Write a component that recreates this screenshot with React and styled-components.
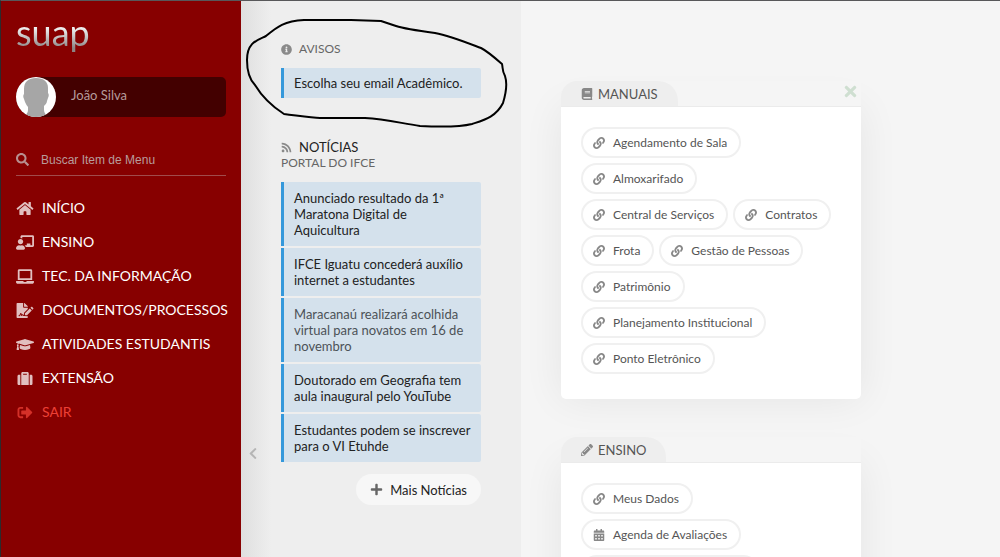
import React from "react";
import styled, { createGlobalStyle } from "styled-components";
import {
  FaBook, FaCalendarAlt, FaChalkboardTeacher, FaChevronLeft, FaFileSignature,
  FaGraduationCap, FaHome, FaInfoCircle, FaLaptop, FaLink, FaPencilAlt, FaPlus,
  FaRss, FaSearch, FaSignOutAlt, FaSuitcase, FaTimes,
} from "react-icons/fa";

const Global = createGlobalStyle`
  *, *::before, *::after { box-sizing: border-box; }
  body { margin: 0; background: #f5f5f5; color: #222; font: 13px/16px Lato, sans-serif; }
  a { color: inherit; text-decoration: none; }
  ul { list-style: none; margin: 0; padding: 0; }
  h1, h2, h3, p { margin: 0; font-weight: 400; }
  button, input { font-family: inherit; border: 0; background: none; padding: 0; }
`;

const Shell = styled.div`
  display: flex;
  height: 100vh;
  overflow: hidden;
  border-top: 1px solid #58585a;
  border-left: 1px solid #2b2b2d;
`;

const Sidebar = styled.nav`
  flex: 0 0 240px;
  min-width: 0;
  padding: 12px 15px;
  background: #870000;
`;

const Logo = styled.a`
  display: block;
  width: max-content;
  height: 44px;
  font-size: 36px;
  line-height: 38px;
  background: linear-gradient(#fff 24%, #ddd 44%, #8c8484 80%);
  background-clip: text;
  color: transparent;
`;

const User = styled.a`
  display: flex;
  align-items: center;
  gap: 15px;
  height: 40px;
  margin-top: 20px;
  border-radius: 20px 5px 5px 20px;
  background: #430000;
  color: #b59c9c;
`;

const Avatar = styled.svg`
  width: 40px;
  height: 40px;
  border-radius: 50%;
  background: #fff;
`;

const UserName = styled.span`
  padding-bottom: 4px;
`;

const Search = styled.label`
  display: flex;
  align-items: center;
  gap: 12px;
  height: 32px;
  margin: 27px 0 15px;
  border-bottom: 1px solid #a04c4c;
  color: #b89090;
  svg { width: 13px; height: 13px; }
`;

const SearchInput = styled.input`
  flex: 1;
  min-width: 0;
  outline: 0;
  color: #b89c9c;
  font: 12px/16px "Liberation Sans", sans-serif;
  &::placeholder { color: #b89c9c; opacity: 1; }
`;

const MenuLink = styled.a`
  display: flex;
  align-items: center;
  gap: 8px;
  height: 34px;
  font-size: 14px;
  white-space: nowrap;
  color: ${(p) => (p.$exit ? "#ee4036" : "#fff")};
  svg { flex: none; width: 18px; height: 15px; opacity: 0.75; }
`;

const News = styled.aside`
  position: relative;
  flex: 0 0 280px;
  padding: 40px;
  background: linear-gradient(90deg, #dfdfdf, #eee 30px);
`;

const Heading = styled.h2`
  display: flex;
  align-items: center;
  gap: 7px;
  font-size: ${(p) => p.$size}px;
  line-height: 16px;
  color: ${(p) => p.$color};
  svg { width: 11px; height: 11px; color: #8a8a8a; }
`;

const Subtitle = styled.p`
  font-size: 12px;
  color: #666;
`;

const List = styled.ul`
  display: grid;
  gap: 2px;
  margin: 11px 0;
`;

const NewsLink = styled.a`
  display: block;
  padding: ${(p) => p.$pad}px 8px ${(p) => p.$pad}px 10px;
  border-left: 3px solid #3498db;
  border-radius: 0 2px 2px 0;
  background: #d4e1ec;
  color: ${(p) => (p.$seen ? "#4c5257" : "#222")};
`;

const NewsSection = styled.section`
  margin-top: 41px;
`;

const More = styled.a`
  display: flex;
  align-items: center;
  gap: 7px;
  width: max-content;
  height: 31px;
  margin: 12px 0 0 auto;
  padding: 0 14px;
  border-radius: 16px;
  background: #f7f7f7;
  svg { width: 13px; height: 13px; color: #666; }
`;

const Collapse = styled.button`
  position: absolute;
  left: 7px;
  top: 446px;
  height: 13px;
  color: #b5b5b5;
  cursor: pointer;
  svg { display: block; width: 10px; height: 13px; }
`;

const Scribble = styled.svg`
  position: absolute;
  left: 0;
  top: 0;
  z-index: 1;
  pointer-events: none;
`;

const Main = styled.main`
  flex: 1;
  min-width: 0;
  display: grid;
  grid-template-columns: repeat(auto-fill, 300px);
  align-content: start;
  gap: 38px 40px;
  padding: 80px 40px;
  overflow: auto;
  scrollbar-width: none;
`;

const CardHead = styled.header`
  position: relative;
  display: flex;
  justify-content: space-between;
  align-items: flex-start;
  border-bottom: 1px solid #ebebeb;
  border-radius: 16px 0 0 0;
  background: #f5f5f5;
`;

const Tab = styled.h3`
  display: flex;
  align-items: center;
  gap: 5px;
  height: 25px;
  padding: 0 20px;
  border-radius: 16px 20px 0 0;
  background: #eee;
  color: #555;
  font-size: 13px;
  svg { width: 12px; height: 12px; color: #888; }
`;

const Close = styled.button`
  margin: 2px 2px 0;
  color: #cfdfd1;
  cursor: pointer;
  svg { display: block; width: 17px; height: 17px; }
`;

const Pills = styled.ul`
  display: flex;
  flex-wrap: wrap;
  gap: 5px;
  padding: 20px 20px 25px;
  border-radius: 0 0 5px 5px;
  background: #fff;
  box-shadow: 0 0 40px rgba(0, 0, 0, 0.07);
`;

const Pill = styled.a`
  display: flex;
  align-items: center;
  gap: 8px;
  height: 31px;
  padding: 0 12px 0 10px;
  border: 2px solid #f0f0f0;
  border-radius: 16px;
  font-size: 12px;
  white-space: nowrap;
  color: #555;
  svg { width: 12px; height: 12px; color: #888; }
`;

const menu = [
  [FaHome, "INÍCIO"],
  [FaChalkboardTeacher, "ENSINO"],
  [FaLaptop, "TEC. DA INFORMAÇÃO"],
  [FaFileSignature, "DOCUMENTOS/PROCESSOS"],
  [FaGraduationCap, "ATIVIDADES ESTUDANTIS"],
  [FaSuitcase, "EXTENSÃO"],
  [FaSignOutAlt, "SAIR"],
];

const news = [
  "Anunciado resultado da 1ª Maratona Digital de Aquicultura",
  "IFCE Iguatu concederá auxílio internet a estudantes",
  "Maracanaú realizará acolhida virtual para novatos em 16 de novembro",
  "Doutorado em Geografia tem aula inaugural pelo YouTube",
  "Estudantes podem se inscrever para o VI Etuhde",
];

const cards = [
  {
    title: "MANUAIS",
    Icon: FaBook,
    closable: true,
    links: [
      [FaLink, "Agendamento de Sala"], [FaLink, "Almoxarifado"],
      [FaLink, "Central de Serviços"], [FaLink, "Contratos"], [FaLink, "Frota"],
      [FaLink, "Gestão de Pessoas"], [FaLink, "Patrimônio"],
      [FaLink, "Planejamento Institucional"], [FaLink, "Ponto Eletrônico"],
    ],
  },
  {
    title: "ENSINO",
    Icon: FaPencilAlt,
    links: [
      [FaLink, "Meus Dados"],
      [FaCalendarAlt, "Agenda de Avaliações"],
      [FaCalendarAlt, "Locais e Horários de Aula"],
    ],
  },
];

export default function App() {
  return (
    <>
      <Global />
      <Shell>
        <Sidebar>
          <Logo href="#">suap</Logo>
          <User href="#">
            <Avatar viewBox="0 0 40 40" aria-hidden="true">
              <path fill="#a6a6a6" d="M20 1C12 1 8 5 8 12v5c-1 1-1 3 0 5l1 3c1 2 2 4 3 5v3c0 3-2 4-3 7h22c-1-3-3-4-3-7v-4c1-1 3-3 3-5l1-3c1-2 1-4 0-5v-5C32 5 28 1 20 1z" />
            </Avatar>
            <UserName>João Silva</UserName>
          </User>
          <Search>
            <FaSearch />
            <SearchInput type="text" aria-label="Buscar Item de Menu" placeholder="Buscar Item de Menu" />
          </Search>
          <ul>
            {menu.map(([Icon, text]) => (
              <li key={text}>
                <MenuLink href="#" $exit={text === "SAIR"}><Icon />{text}</MenuLink>
              </li>
            ))}
          </ul>
        </Sidebar>
        <News>
          <Heading $size={12} $color="#666"><FaInfoCircle />AVISOS</Heading>
          <List>
            <li><NewsLink href="#" $pad={7}>Escolha seu email Acadêmico.</NewsLink></li>
          </List>
          <NewsSection>
            <Heading $size={13} $color="#222"><FaRss />NOTÍCIAS</Heading>
            <Subtitle>PORTAL DO IFCE</Subtitle>
            <List>
              {news.map((text, i) => (
                <li key={text}><NewsLink href="#" $pad={8} $seen={i === 2}>{text}</NewsLink></li>
              ))}
            </List>
            <More href="#"><FaPlus />Mais Notícias</More>
          </NewsSection>
          <Collapse type="button" aria-label="Recolher"><FaChevronLeft /></Collapse>
          <Scribble width="280" height="140" viewBox="241 1 280 140" fill="none" stroke="#000" strokeWidth="2" strokeLinejoin="round" strokeLinecap="round" aria-hidden="true">
            <path d="M381 21L351 20L304 20C284 21 277 27 266 36C258 40 247 42 247 60C247 75 251 81 255 85C261 95 270 105 284 114C300 116 312 118 320 118L365 118C385 119 400 123 420 126C440 127 460 127 472 124C484 120 496 117 503 103C507 90 507 82 505 76C502 71 503 68 502 64C494 57 487 51 481 48C465 42 450 36 435 33C420 31 405 29 396 26L381 21" />
          </Scribble>
        </News>
        <Main>
          {cards.map(({ title, Icon, closable, links }) => (
            <section key={title}>
              <CardHead>
                <Tab><Icon />{title}</Tab>
                {closable && <Close type="button" aria-label="Fechar"><FaTimes /></Close>}
              </CardHead>
              <Pills>
                {links.map(([LinkIcon, text]) => (
                  <li key={text}><Pill href="#"><LinkIcon />{text}</Pill></li>
                ))}
              </Pills>
            </section>
          ))}
        </Main>
      </Shell>
    </>
  );
}
